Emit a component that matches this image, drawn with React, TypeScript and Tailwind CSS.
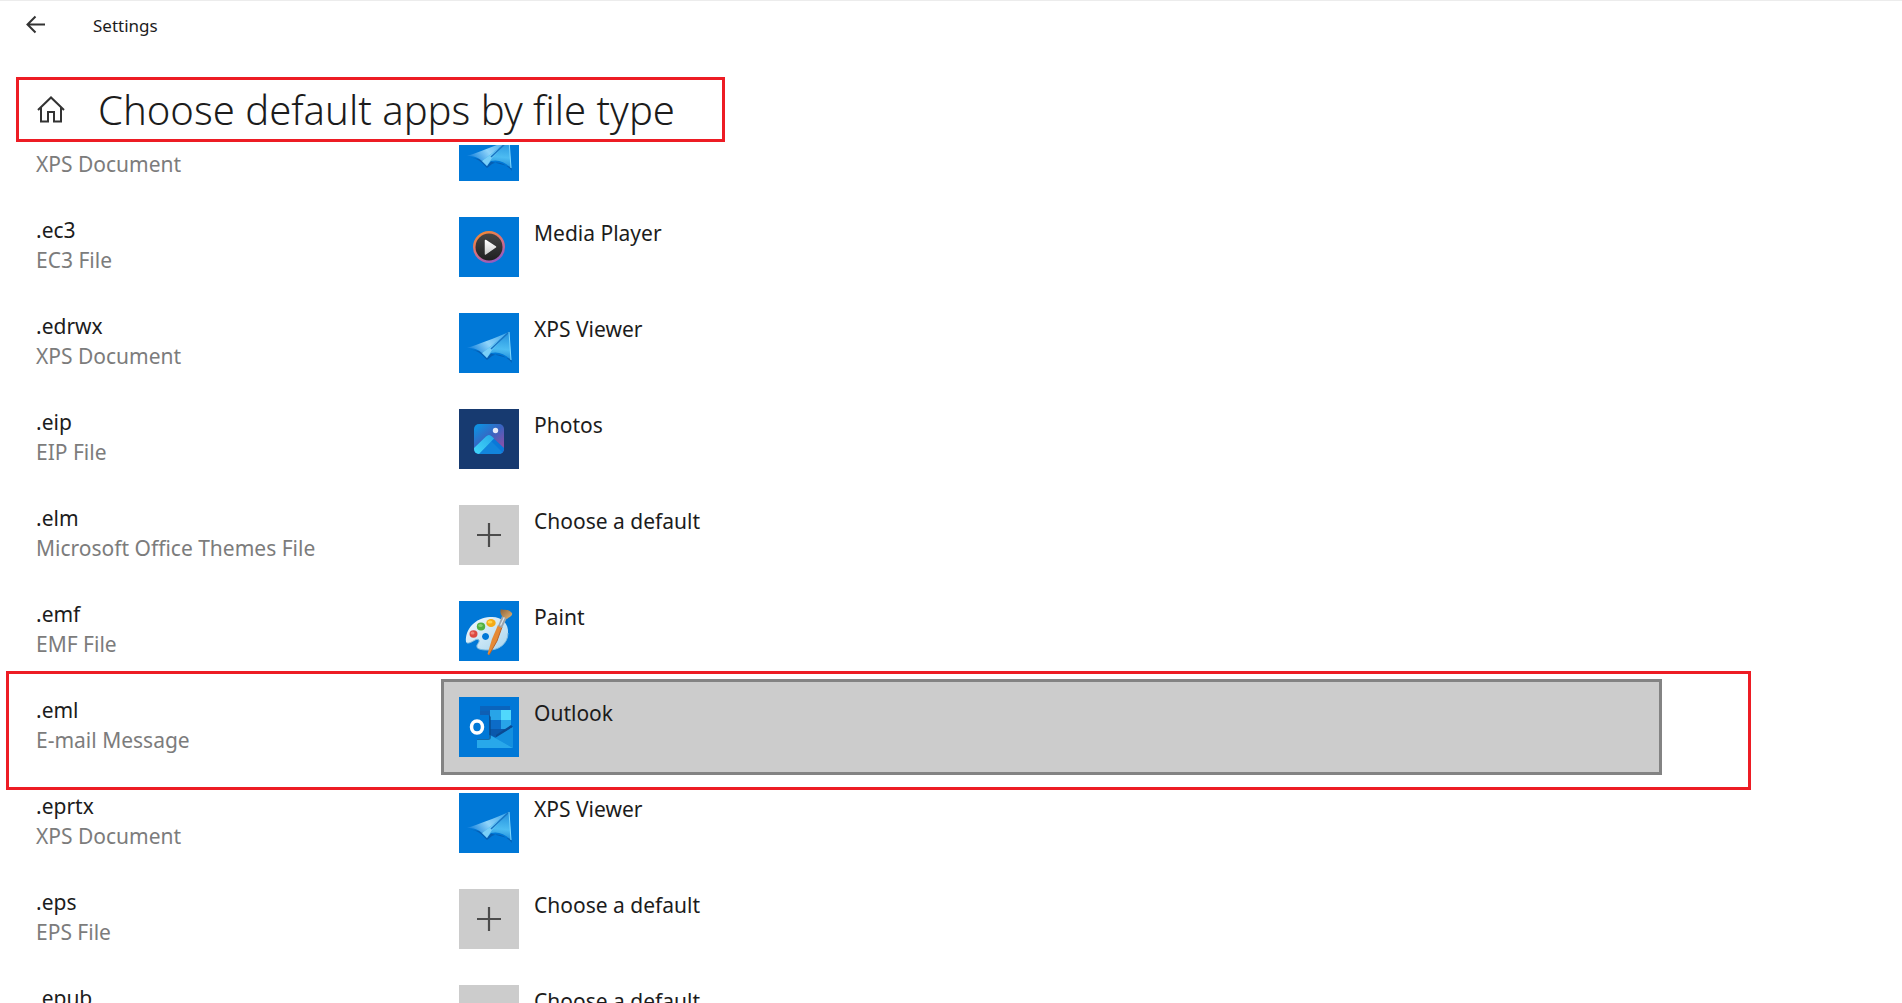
import React from "react";

type AppKind = "media" | "xps" | "photos" | "none" | "paint" | "outlook";

interface FileType {
  ext?: string;
  description: string;
  app?: string;
  kind: AppKind;
  selected?: boolean;
}

const fileTypes: FileType[] = [
  { description: "XPS Document", kind: "xps" },
  { ext: ".ec3", description: "EC3 File", app: "Media Player", kind: "media" },
  { ext: ".edrwx", description: "XPS Document", app: "XPS Viewer", kind: "xps" },
  { ext: ".eip", description: "EIP File", app: "Photos", kind: "photos" },
  { ext: ".elm", description: "Microsoft Office Themes File", app: "Choose a default", kind: "none" },
  { ext: ".emf", description: "EMF File", app: "Paint", kind: "paint" },
  { ext: ".eml", description: "E-mail Message", app: "Outlook", kind: "outlook", selected: true },
  { ext: ".eprtx", description: "XPS Document", app: "XPS Viewer", kind: "xps" },
  { ext: ".eps", description: "EPS File", app: "Choose a default", kind: "none" },
  { ext: ".epub", description: "EPUB File", app: "Choose a default", kind: "none" },
];

function MediaIcon() {
  return (
    <svg viewBox="0 0 60 60" className="size-full" aria-hidden="true">
      <defs>
        <linearGradient id="ring" x1="0.2" y1="0" x2="0.7" y2="1">
          <stop offset="0" stopColor="#f58a2c" />
          <stop offset="0.5" stopColor="#d9707c" />
          <stop offset="1" stopColor="#8a58c8" />
        </linearGradient>
        <linearGradient id="disc" x1="0" y1="0" x2="0" y2="1">
          <stop offset="0" stopColor="#454545" />
          <stop offset="1" stopColor="#202020" />
        </linearGradient>
        <linearGradient id="play" x1="0" y1="0" x2="0" y2="1">
          <stop offset="0" stopColor="#ffffff" />
          <stop offset="1" stopColor="#cfcfcf" />
        </linearGradient>
      </defs>
      <circle cx="30" cy="30" r="16" fill="url(#ring)" />
      <circle cx="30" cy="30" r="13.500" fill="url(#disc)" />
      <path d="M26.500 23.500 L36.500 30 L26.500 37 Z" fill="url(#play)" stroke="url(#play)" strokeWidth="1.500" strokeLinejoin="round" />
    </svg>
  );
}

function XpsIcon() {
  return (
    <svg viewBox="0 0 60 60" className="size-full" aria-hidden="true">
      <defs>
        <linearGradient id="wingL" x1="0" y1="0.6" x2="1" y2="0.2">
          <stop offset="0" stopColor="#1b86de" />
          <stop offset="0.45" stopColor="#8fd4fa" />
          <stop offset="1" stopColor="#3ea6ea" />
        </linearGradient>
        <linearGradient id="wingR" x1="0.6" y1="0" x2="0.5" y2="1">
          <stop offset="0" stopColor="#2391de" />
          <stop offset="0.6" stopColor="#4dbcf2" />
          <stop offset="1" stopColor="#1d8ad8" />
        </linearGradient>
      </defs>
      <path d="M9 36 C16 37 20 39 23 42 L28 47 L33 43 C39 39 47 43 53 50 L52 46 L30 40 Z" fill="#0755a6" opacity="0.75" />
      <path d="M8 35 C20 31 36 25 50 19 L34 33 L23 40 C19 36 14 35 8 35 Z" fill="url(#wingL)" />
      <path d="M50 19 L52 47 C46 41 39 38 32 40 L28 45 L23 40 Z" fill="url(#wingR)" />
      <path d="M46 23 L23 40 L28 45 L33 37 Z" fill="#79cff8" />
      <path d="M50 19 L32 36" stroke="#1674c4" strokeWidth="1.500" />
      <path d="M50 19 L52 47" stroke="#7fd8ff" strokeWidth="1" />
    </svg>
  );
}

function PhotosIcon() {
  return (
    <svg viewBox="0 0 60 60" className="size-full" aria-hidden="true">
      <defs>
        <linearGradient id="sky" x1="0.2" y1="0" x2="0.9" y2="0.8">
          <stop offset="0" stopColor="#108fe0" />
          <stop offset="0.5" stopColor="#3a63c0" />
          <stop offset="1" stopColor="#8a50a8" />
        </linearGradient>
        <linearGradient id="slope" x1="1" y1="0" x2="0" y2="1">
          <stop offset="0" stopColor="#28a8e8" />
          <stop offset="1" stopColor="#42d8fa" />
        </linearGradient>
        <clipPath id="photoClip">
          <rect x="15" y="15" width="30" height="30" rx="5" />
        </clipPath>
      </defs>
      <g clipPath="url(#photoClip)">
        <rect x="15" y="15" width="30" height="30" fill="url(#sky)" />
        <path d="M15 45 L28 27 Q30 25 32 27 L45 39 V45 Z" fill="#0a78d8" />
        <path d="M32 32 L45 45 H20 Z" fill="#1285dc" />
        <path d="M15 39 L27 27.500 Q30 24.500 33 27.500 L35 29.500 L20 45 H15 Z" fill="url(#slope)" />
      </g>
      <circle cx="36.500" cy="21.500" r="2.700" fill="#e8ecf8" />
    </svg>
  );
}

function PaintIcon() {
  return (
    <svg viewBox="0 0 60 60" className="size-full" aria-hidden="true">
      <defs>
        <linearGradient id="palette" x1="0" y1="0" x2="1" y2="1">
          <stop offset="0" stopColor="#f4fafd" />
          <stop offset="1" stopColor="#a6d4ee" />
        </linearGradient>
        <linearGradient id="bristle" x1="0" y1="0" x2="1" y2="1">
          <stop offset="0" stopColor="#8a6038" />
          <stop offset="1" stopColor="#e6b878" />
        </linearGradient>
      </defs>
      <path
        fillRule="evenodd"
        d="M7 41 C6 28 16 17 31 16 C42 15 50 22 49 32 C49 43 39 50 28 49 C23 49 18 48 18 46 C17 43 21 42 20 39 C18 36 12 43 8 42 Z M26.500 32 a3.500 3.500 0 1 0 0.100 0 Z"
        fill="url(#palette)"
      />
      <path d="M8 42 C12 43 18 36 20 39 C21 42 17 43 18 46 C18 48 23 49 28 49 C39 50 49 43 49 32" fill="none" stroke="#80bce0" strokeWidth="1" />
      <ellipse cx="14.500" cy="33" rx="4" ry="3.700" fill="#dc4a42" />
      <ellipse cx="13.500" cy="32" rx="2" ry="1.500" fill="#f0857a" />
      <ellipse cx="22" cy="25.500" rx="4.200" ry="4" fill="#50b040" />
      <ellipse cx="21.500" cy="24.500" rx="2.200" ry="1.600" fill="#88d070" />
      <ellipse cx="32" cy="22" rx="4.700" ry="4" fill="#f5ab15" />
      <ellipse cx="31" cy="21" rx="2.500" ry="1.600" fill="#ffd24a" />
      <path d="M43 26 L38 40 L30 54 L28.500 53 L33 38 L39 24 Z" fill="#e58a35" />
      <path d="M43 26 L38 40 L30 54" stroke="#b8622a" strokeWidth="1" fill="none" />
      <path d="M39 25 L43 15 L48 17 L43 27 Z" fill="#9aa4ac" />
      <path d="M41.500 24.500 L45.500 16" stroke="#e0e6ea" strokeWidth="1.200" />
      <path d="M43 15 C41 12 41 10 42 8 C45 10 49 7 53 12 C54 15 50 16 48 18 Z" fill="url(#bristle)" />
    </svg>
  );
}

function OutlookIcon() {
  return (
    <svg viewBox="0 0 60 60" className="size-full" aria-hidden="true">
      <rect x="21" y="9" width="30" height="5" fill="#0a64bc" />
      <rect x="21" y="14" width="10" height="26" fill="#0f5fb4" />
      <rect x="31" y="13" width="11" height="10" fill="#28a4e8" />
      <rect x="42" y="13" width="10" height="10" fill="#50d8fc" />
      <rect x="31" y="23" width="11" height="9" fill="#0c6cc8" />
      <rect x="42" y="23" width="10" height="9" fill="#28a4e8" />
      <path d="M31 32 H52 L37 41 L31 38 Z" fill="#0a58ac" />
      <path d="M52 28 L54 30 L37 41 V38 Z" fill="#0a4a92" />
      <path d="M54 30 V51 L36 41 Z" fill="#1490df" />
      <path d="M18 42 L31 38 L54 51 H18 Z" fill="#28a8ea" />
      <path d="M18 43 H29 Q32 43 32 40 V20 L30 18 V40 H18 Z" fill="#084a88" opacity="0.65" />
      <rect x="6" y="18" width="24" height="24" rx="1" fill="#0078d7" />
      <ellipse cx="18" cy="30" rx="5.500" ry="6" fill="none" stroke="#fff" strokeWidth="3.500" />
    </svg>
  );
}

function PlusIcon() {
  return (
    <svg viewBox="0 0 60 60" className="size-full" aria-hidden="true">
      <path d="M18 30 H42 M30 18 V42" stroke="#4c4c4c" strokeWidth="2.200" />
    </svg>
  );
}

const tiles: Record<AppKind, { icon: () => React.JSX.Element; background: string }> = {
  media: { icon: MediaIcon, background: "bg-[#0078d7]" },
  xps: { icon: XpsIcon, background: "bg-[#0078d7]" },
  photos: { icon: PhotosIcon, background: "bg-[#173a70]" },
  none: { icon: PlusIcon, background: "bg-[#cccccc]" },
  paint: { icon: PaintIcon, background: "bg-[#0078d7]" },
  outlook: { icon: OutlookIcon, background: "bg-[#0078d7]" },
};

function FileTypeRow({ item }: { item: FileType }) {
  const { icon: Icon, background } = tiles[item.kind];
  return (
    <li className="relative flex h-24 shrink-0 pr-60 pl-9">
      <div className="flex w-[405px] shrink-0 flex-col pt-4 text-[21px] leading-[30px]">
        <p className="h-[30px]">{item.ext}</p>
        <p className="text-[#7c7c7c]">{item.description}</p>
      </div>
      <button
        type="button"
        aria-label={`${item.ext ?? item.description} ${item.app ?? "default app"}`}
        className={
          item.selected
            ? "flex flex-1 items-start border-3 border-[#838383] bg-[#cccccc] p-[15px] text-left"
            : "flex flex-1 items-start border-3 border-transparent p-[15px] text-left"
        }
      >
        <span className={`size-[60px] shrink-0 ${background}`}>
          <Icon />
        </span>
        {item.app && <span className="ml-[15px] text-[21px] leading-8">{item.app}</span>}
      </button>
      {item.selected && (
        <div className="pointer-events-none absolute -top-2 right-[151px] -bottom-[15px] left-1.5 border-3 border-[#ed1c24]" />
      )}
    </li>
  );
}

export default function App() {
  return (
    <div className="flex h-screen flex-col overflow-hidden border-t border-[#ececec] bg-white font-['Noto_Sans','Open_Sans',sans-serif] text-[#1c1c1c]">
      <header className="flex h-[76px] shrink-0 items-start pt-[11px] pl-[26px]">
        <button type="button" aria-label="Back" className="flex size-6 items-center justify-center">
          <svg viewBox="0 0 24 24" className="size-6" fill="none" stroke="#333" strokeWidth="2" aria-hidden="true">
            <path d="M19 12.500 H2 M9.500 4.500 L1.500 12.500 L9.500 20.500" />
          </svg>
        </button>
        <span className="ml-[43px] text-[17px] leading-7">Settings</span>
      </header>

      <div className="ml-4 flex h-[65px] shrink-0 items-center self-start border-3 border-[#ed1c24] pr-[47px] pl-[17px]">
        <button type="button" aria-label="Home" className="size-[30px]">
          <svg viewBox="0 0 30 30" className="size-full" fill="none" stroke="#333" strokeWidth="2" aria-hidden="true">
            <path d="M2 15 L15 2.500 L28 15 M5 12.500 V26.500 H12 V17 H18 V26.500 H25 V12.500" />
          </svg>
        </button>
        <h1 className="ml-8 text-[40px] leading-[56px] font-light">Choose default apps by file type</h1>
      </div>

      <main className="mt-[3px] min-h-0 flex-1 overflow-hidden">
        <ul className="-mt-[42px] flex flex-col">
          {fileTypes.map((item, index) => (
            <FileTypeRow key={index} item={item} />
          ))}
        </ul>
      </main>
    </div>
  );
}
